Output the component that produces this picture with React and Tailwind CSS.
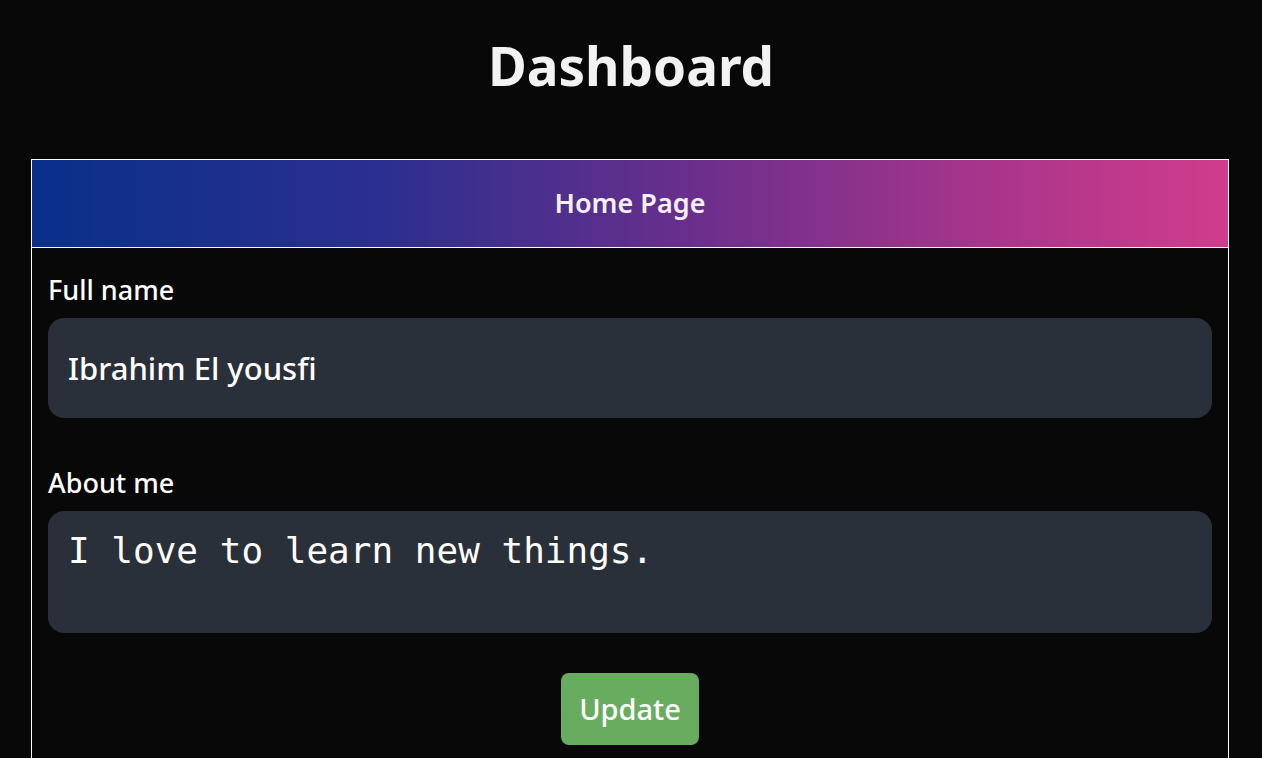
export default function App() {
  return (
    <div className="min-h-screen bg-[#080808] font-['Noto_Sans',sans-serif] text-white">
      <h1 className="pt-[28px] text-center text-[53px] font-bold leading-[76px] text-[#f2f2f2]">
        Dashboard
      </h1>
      <div className="ml-[31px] mr-[33px] mt-[55px] border border-white">
        <div className="flex h-[88px] items-center justify-center border-b border-white bg-[linear-gradient(90deg,#08308a_0%,#2d2f8f_30%,#6a2f8c_55%,#a8358b_80%,#d13c8c_100%)]">
          <span className="text-[27px] font-semibold text-[#f4f0f8]">Home Page</span>
        </div>
        <div className="px-[16px] pt-[22px] pb-[20px]">
          <label className="block text-[27px] font-medium leading-[40px]">Full name</label>
          <div className="mt-[8px] flex h-[100px] items-center rounded-[16px] bg-[#2a303a] px-[20px] text-[31px] font-medium">
            Ibrahim El yousfi
          </div>
          <label className="mt-[45px] block text-[27px] font-medium leading-[40px]">About me</label>
          <div className="mt-[8px] h-[122px] rounded-[16px] bg-[#2a303a] px-[20px] pt-[16px] font-['DejaVu_Sans_Mono',monospace] text-[36px] leading-[48px]">
            I love to learn new things.
          </div>
          <div className="mt-[40px] flex justify-center">
            <button className="h-[72px] w-[138px] rounded-[8px] bg-[#68ad5f] text-[29px] font-medium text-white">
              Update
            </button>
          </div>
        </div>
      </div>
    </div>
  );
}
